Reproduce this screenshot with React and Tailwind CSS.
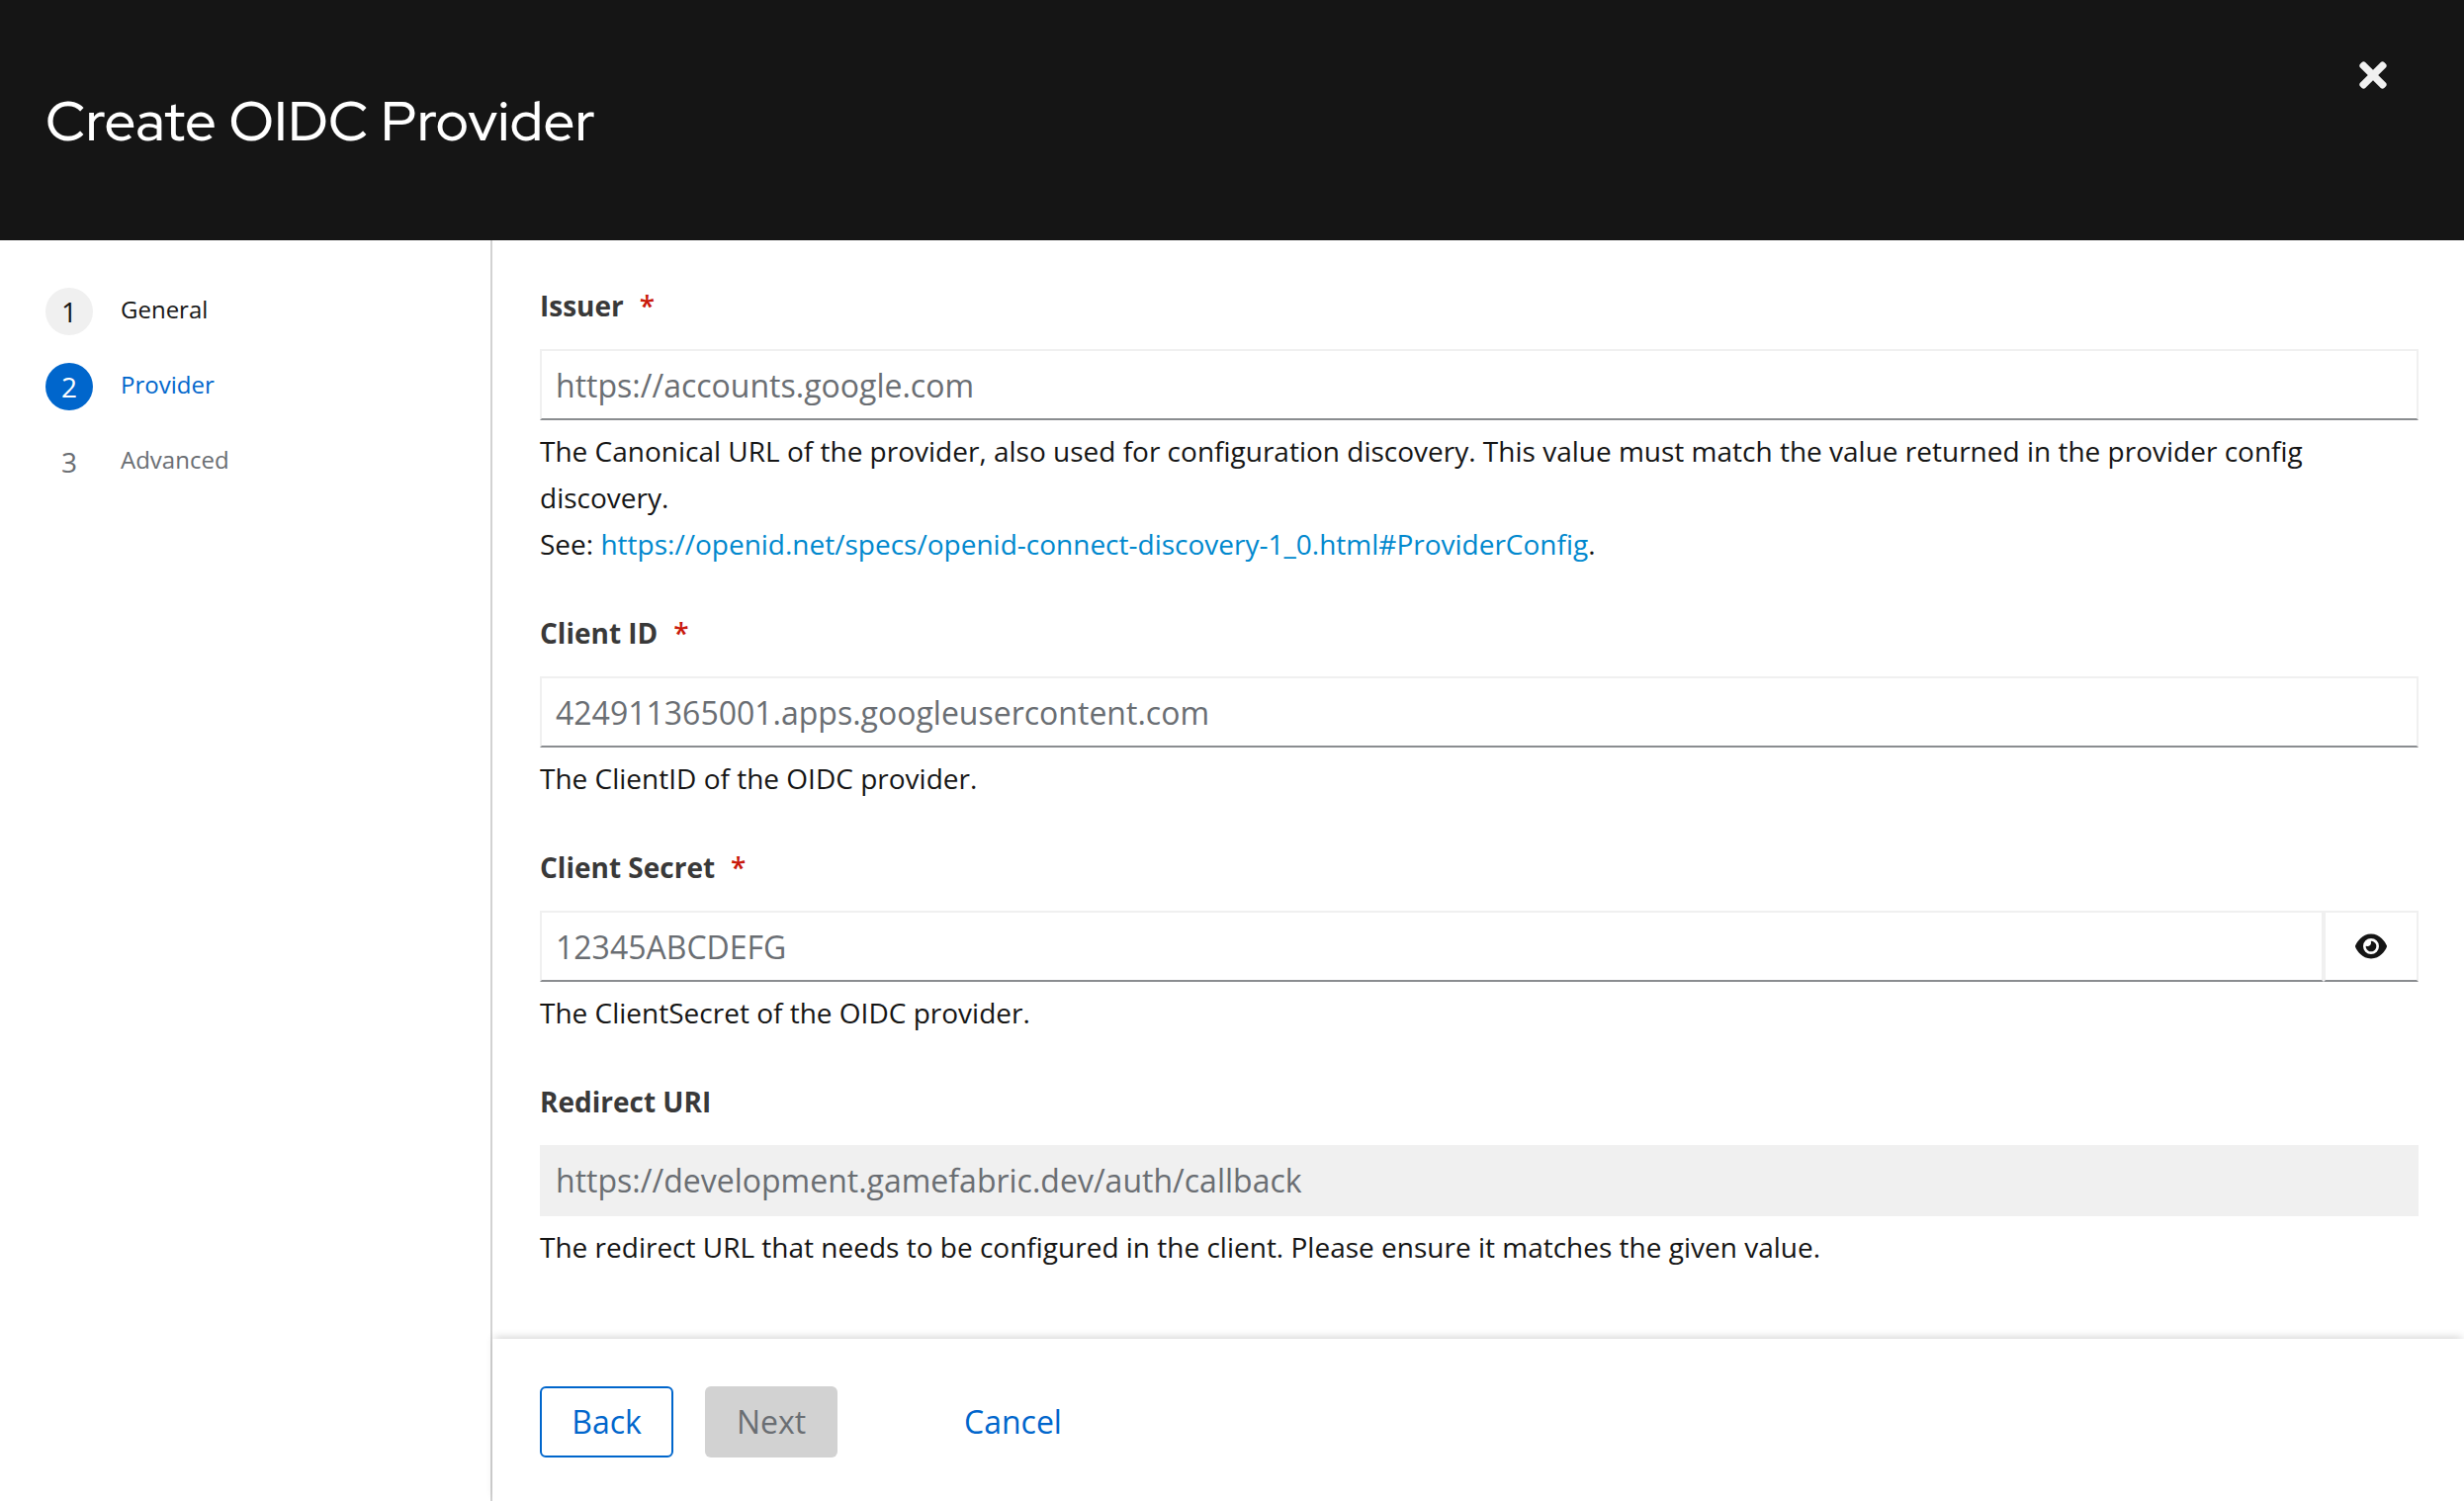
import React from "react";
import { FaTimes } from "react-icons/fa";
import { FaEye } from "react-icons/fa6";

function Step({ n, label, circle, text }) {
  return (
    <li className="flex h-12 items-start">
      <span className={"flex h-12 w-12 shrink-0 items-center justify-center rounded-full text-[28px] leading-none " + circle}>{n}</span>
      <span className={"ml-7 text-[24px] leading-[44px] " + text}>{label}</span>
    </li>
  );
}

function Field({ label, required, children, help }) {
  return (
    <div className="flex flex-col">
      <label className="flex h-[47px] text-[28px] leading-[46px] font-bold text-[#393939]">
        {label}
        {required && <span className="ml-4 font-semibold text-[#c9190b]">*</span>}
      </label>
      <div className="mt-5 flex h-[72px]">{children}</div>
      <div className="mt-2 text-[28px] leading-[47px] text-[#151515]">{help}</div>
    </div>
  );
}

const inputClass =
  "h-[72px] min-w-0 flex-1 border-2 border-[#f0f0f0] border-b-[#8a8d90] bg-white px-[14px] text-[32px] text-[#6a6e73] placeholder:text-[#6a6e73] placeholder:opacity-100 outline-none";

export default function App() {
  return (
    <div className="flex h-[1518px] w-[2492px] flex-col overflow-hidden bg-white font-['Open_Sans',sans-serif]">
      <header className="flex h-[243px] shrink-0 items-start justify-between bg-[#151515] pl-[46px] text-white">
        <h1 className="mt-[86px] font-['Red_Hat_Display','Lato',sans-serif] text-[56px] leading-[73px] font-medium tracking-[0.42px]">Create OIDC Provider</h1>
        <button className="mt-[56px] mr-[72px] text-[#f0f0f0]" aria-label="Close"><FaTimes size={40} /></button>
      </header>
      <div className="flex min-h-0 flex-1">
        <nav className="w-[498px] shrink-0 border-r-2 border-[#d2d2d2] pt-12 pl-[46px]">
          <ol className="flex flex-col gap-7">
            <Step n="1" label="General" circle="bg-[#f0f0f0] text-[#151515]" text="text-[#151515]" />
            <Step n="2" label="Provider" circle="bg-[#0066cc] text-white" text="text-[#0066cc]" />
            <Step n="3" label="Advanced" circle="text-[#6a6e73]" text="text-[#6a6e73]" />
          </ol>
        </nav>
        <div className="flex min-w-0 flex-1 flex-col">
          <main className="flex min-h-0 flex-1 flex-col gap-[43px] pt-[43px] pr-[46px] pl-12">
            <Field label="Issuer" required help={<>The Canonical URL of the provider, also used for configuration discovery. This value must match the value returned in the provider config discovery.<br />See: <a className="text-[#0088ce]">https://openid.net/specs/openid-connect-discovery-1_0.html#ProviderConfig</a>.</>}>
              <input className={inputClass} placeholder="https://accounts.google.com" />
            </Field>
            <Field label="Client ID" required help="The ClientID of the OIDC provider.">
              <input className={inputClass} placeholder="424911365001.apps.googleusercontent.com" />
            </Field>
            <Field label="Client Secret" required help="The ClientSecret of the OIDC provider.">
              <input className={inputClass} placeholder="12345ABCDEFG" />
              <button className="flex w-24 items-center justify-center border-2 border-[#f0f0f0] border-b-[#8a8d90] text-[#151515]" aria-label="Show secret"><FaEye size={32} /></button>
            </Field>
            <Field label="Redirect URI" help="The redirect URL that needs to be configured in the client. Please ensure it matches the given value.">
              <input disabled className="min-w-0 flex-1 bg-[#f0f0f0] px-4 text-[32px] text-[#6a6e73]" defaultValue="https://development.gamefabric.dev/auth/callback" />
            </Field>
          </main>
          <footer className="flex h-[164px] shrink-0 items-start px-12 pt-12 text-[32px] shadow-[0_-4px_8px_-2px_rgba(3,3,3,0.16)]">
            <button className="h-[72px] w-[135px] rounded-md border-2 border-[#0066cc] text-[#0066cc]">Back</button>
            <button className="ml-8 h-[72px] w-[134px] rounded-md bg-[#d2d2d2] text-[#6a6e73]">Next</button>
            <button className="ml-24 h-[72px] px-8 text-[#0066cc]">Cancel</button>
          </footer>
        </div>
      </div>
    </div>
  );
}
